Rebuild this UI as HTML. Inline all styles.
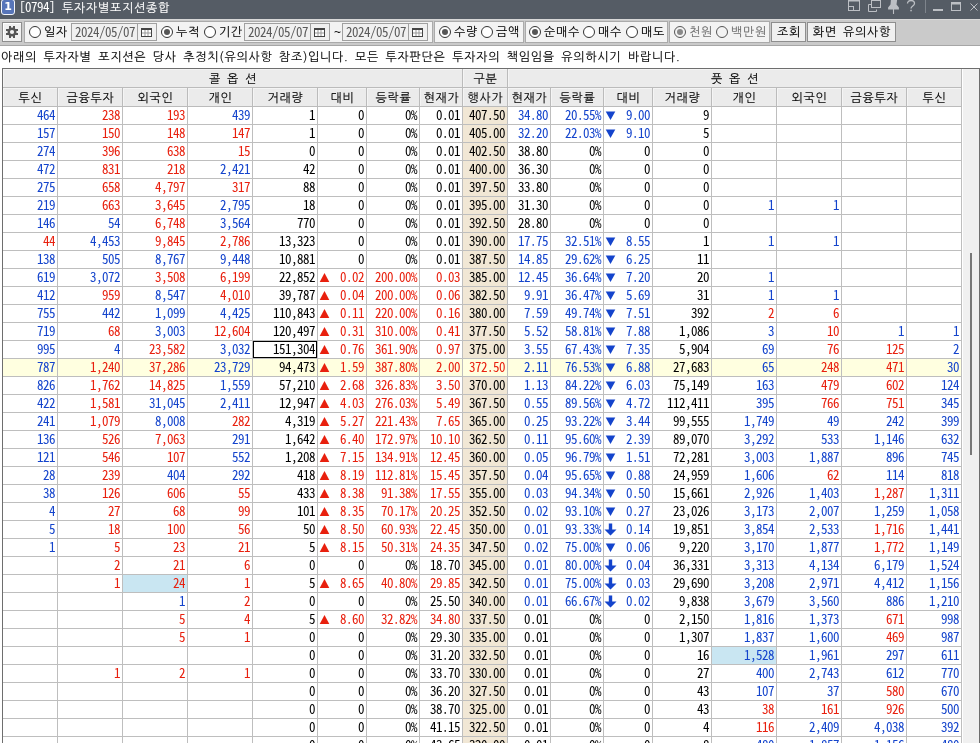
<!DOCTYPE html><html lang="ko"><head><meta charset="utf-8"><title>[0794] 투자자별포지션종합</title><style>
*{box-sizing:border-box}
html,body{margin:0;padding:0}
body{will-change:transform;width:980px;height:743px;overflow:hidden;background:#fff;position:relative;letter-spacing:-0.5px;font:13px "Noto Sans CJK KR","IPAGothic","NanumGothic",sans-serif;font-feature-settings:"hwid";color:#000}
.ko{font-family:"NanumGothic","Noto Sans CJK KR",sans-serif;font-size:12px;letter-spacing:0.72px;-webkit-text-stroke:0.12px}
.abs{position:absolute}
#tb{left:0;top:0;width:980px;height:19px;background:#555c65}
#ico{left:1px;top:-1px;width:14px;height:16px;border:1px solid #f4f6fa;border-radius:3px;background:#5775b9;color:#fff;font:bold 11px/14px "DejaVu Sans","Liberation Sans",sans-serif;text-align:center;letter-spacing:0}
#ttl{left:19px;top:0;height:15px;line-height:13px;color:#fff;white-space:nowrap}
#bar{left:0;top:19px;width:980px;height:27px;background:#cacaca;border-bottom:1px solid #a6a6a6;box-shadow:inset 0 1px 0 #d8d8d8}
.grp{top:2px;height:22px;background:#f3f3f3;border:1px solid #aaa}
.btn{top:3px;height:20px;background:#f0f0f0;border:1px solid #8e8e8e;text-align:center;line-height:18px;white-space:nowrap;padding-left:1px}
.rd{top:7px;width:12px;height:12px;border:1px solid #333;border-radius:50%;background:#fff}
.rd.on::after{content:"";position:absolute;left:2px;top:2px;width:6px;height:6px;border-radius:50%;background:#555}
.rd.dis{border-color:#555;background:#f3f3f3}
.rd.dis.on::after{background:#888}
.lb{top:3px;margin-left:1px;height:20px;line-height:20px;white-space:nowrap}
.lb.dis{color:#707070}
.dt{top:4px;width:86px;height:18px;border:1px solid #a0a0a0;background:#f0f0f0}
.dt span{position:absolute;left:3px;top:0px;line-height:16px;color:#5a5a5a}
.dt i{position:absolute;left:65px;top:-1px;width:20px;height:18px;border:1px solid #a0a0a0;background:#f0f0f0}
.dt svg{position:absolute;left:3px;top:4px}
#note{left:1px;top:48px;height:18px;line-height:19px;white-space:nowrap;word-spacing:2.5px}
#grid{left:2px;top:68px;width:978px;height:675px;border-left:1px solid #6e6e6e;border-top:1px solid #6e6e6e;border-right:1px solid #6e6e6e;background:#fff;overflow:hidden}
.row{position:absolute;left:0;height:18px;display:flex;white-space:nowrap}
.row>div{height:18px;border-right:1px solid #bebebe;border-bottom:1px solid #bebebe;text-align:right;padding-right:2px;line-height:15px;flex:none;position:relative}
.hd>div{background:#ebebeb;text-align:center;padding:1px 0 0 1px;height:19px;line-height:18px;border-color:#bbb;box-shadow:inset 1px 1px 0 #f4f4f4}
.b{color:#1444cc}.r{color:#e8200e}.k{color:#000}
.st{background:#f1e7d5}
.hl>div{background:#ffffe0}
.sel{background:#c9e6f2 !important}
.foc{box-shadow:inset 0 0 0 1px #000}
.ar{position:absolute;left:1px;top:3px}
#sb{left:959px;top:0;width:17px;height:675px;background:#f0f0f0;border-left:1px solid #fff}
#th{left:967px;top:184px;width:2px;height:202px;background:#787878}
</style></head><body>
<div id="tb" class="abs"><div id="ico" class="abs">1</div><div id="ttl" class="abs">[0794] <span class="ko" style="margin-left:1px">투자자별포지션종합</span></div>
<svg class="abs" style="left:840px;top:0" width="140" height="19" viewBox="0 0 140 19" fill="none" stroke="#bcbfc4" stroke-width="1">
<rect x="8.5" y="0.5" width="11" height="10"/><rect x="8" y="-1" width="12" height="2.5" fill="#bcbfc4" stroke="none"/><rect x="8.5" y="6.5" width="5" height="4"/>
<rect x="31.5" y="-0.5" width="9" height="8"/><rect x="31" y="-1" width="10" height="2" fill="#bcbfc4" stroke="none"/><path d="M31.5 4.500h-3v7h8v-2"/>
<path d="M50.900 0H57.100L56.500 4.500L58.900 7.500V9.600H48.100V7.500L50.500 4.500Z" fill="#bcbfc4" stroke="none"/><path d="M53.500 9v5" stroke-width="1.100"/>
<path d="M67.5 3.5c0-4 7-4 7 0c0 2.5-3.500 2.500-3.500 5" stroke-width="1.3"/><rect x="70.300" y="9.800" width="1.500" height="1.500" fill="#bcbfc4" stroke="none"/>
<path d="M85.500 0v13" stroke="#7e848c"/>
<rect x="93" y="9" width="10" height="2" fill="#bcbfc4" stroke="none"/>
<rect x="111.500" y="2.500" width="9" height="8"/><rect x="111" y="2" width="10" height="2.500" fill="#bcbfc4" stroke="none"/>
<path d="M130.500 3.500l7 7m0-7l-7 7" stroke-width="1"/>
</svg>
</div>
<div id="bar" class="abs">
<div class="abs btn" style="left:2px;width:20px;padding:0;box-shadow:inset 1px 1px 0 #fff"><svg width="12" height="12" viewBox="0 0 12 12" style="position:absolute;left:3px;top:3px"><g fill="#555"><rect x="3" y="0" width="2" height="12"/><rect x="7" y="0" width="2" height="12"/><rect x="0" y="3" width="12" height="2"/><rect x="0" y="7" width="12" height="2"/><circle cx="6" cy="6" r="4.500"/></g><circle cx="6" cy="6" r="2.100" fill="#f0f0f0"/></svg></div>
<div class="abs grp" style="left:24px;width:409px"></div>
<div class="abs grp" style="left:434px;width:90px"></div>
<div class="abs grp" style="left:525px;width:143px"></div>
<div class="abs grp" style="left:669px;width:101px"></div>
<div class="abs rd" style="left:29px"></div><div class="abs lb ko" style="left:43px">일자</div><div class="abs dt" style="left:71px"><span>2024/05/07</span><i><svg width="11" height="9" viewBox="0 0 11 9"><rect x="0.5" y="0.5" width="10" height="8" fill="#fff" stroke="#444"/><rect x="0" y="0" width="11" height="2" fill="#444"/><path d="M4 2v6M7 2v6M1 5h9" stroke="#999" stroke-width="1"/></svg></i></div>
<div class="abs rd on" style="left:161px"></div><div class="abs lb ko" style="left:175px">누적</div>
<div class="abs rd" style="left:204px"></div><div class="abs lb ko" style="left:218px">기간</div><div class="abs dt" style="left:244px"><span>2024/05/07</span><i><svg width="11" height="9" viewBox="0 0 11 9"><rect x="0.5" y="0.5" width="10" height="8" fill="#fff" stroke="#444"/><rect x="0" y="0" width="11" height="2" fill="#444"/><path d="M4 2v6M7 2v6M1 5h9" stroke="#999" stroke-width="1"/></svg></i></div>
<div class="abs lb" style="left:333px;font:12px/20px Liberation Sans,sans-serif">~</div>
<div class="abs dt" style="left:342px"><span>2024/05/07</span><i><svg width="11" height="9" viewBox="0 0 11 9"><rect x="0.5" y="0.5" width="10" height="8" fill="#fff" stroke="#444"/><rect x="0" y="0" width="11" height="2" fill="#444"/><path d="M4 2v6M7 2v6M1 5h9" stroke="#999" stroke-width="1"/></svg></i></div>
<div class="abs rd on" style="left:439px"></div><div class="abs lb ko" style="left:453px">수량</div><div class="abs rd" style="left:481px"></div><div class="abs lb ko" style="left:495px">금액</div>
<div class="abs rd on" style="left:529px"></div><div class="abs lb ko" style="left:543px">순매수</div><div class="abs rd" style="left:583px"></div><div class="abs lb ko" style="left:597px">매수</div><div class="abs rd" style="left:626px"></div><div class="abs lb ko" style="left:640px">매도</div>
<div class="abs rd on dis" style="left:674px"></div><div class="abs lb ko dis" style="left:688px">천원</div><div class="abs rd dis" style="left:716px"></div><div class="abs lb ko dis" style="left:730px">백만원</div>
<div class="abs btn ko" style="left:771px;width:35px">조회</div>
<div class="abs btn ko" style="left:807px;width:89px;word-spacing:2px">화면 유의사항</div>
</div>
<div id="note" class="abs ko">아래의 투자자별 포지션은 당사 추정치(유의사항 참조)입니다. 모든 투자판단은 투자자의 책임임을 유의하시기 바랍니다.</div>
<div id="grid" class="abs">
<div class="row hd ko" style="top:0;height:19px"><div style="width:460px;word-spacing:2px">콜 옵 션</div><div style="width:45px">구분</div><div style="width:454px;word-spacing:2px">풋 옵 션</div></div>
<div class="row hd ko" style="top:19px;height:19px"><div style="width:55px">투신</div><div style="width:65px">금융투자</div><div style="width:65px">외국인</div><div style="width:65px">개인</div><div style="width:65px">거래량</div><div style="width:49px">대비</div><div style="width:53px">등락률</div><div style="width:43px">현재가</div><div style="width:45px">행사가</div><div style="width:43px">현재가</div><div style="width:53px">등락률</div><div style="width:49px">대비</div><div style="width:59px">거래량</div><div style="width:65px">개인</div><div style="width:65px">외국인</div><div style="width:65px">금융투자</div><div style="width:55px">투신</div></div>
<div class="row" style="top:38px"><div class="b" style="width:55px">464</div><div class="r" style="width:65px">238</div><div class="r" style="width:65px">193</div><div class="b" style="width:65px">439</div><div class="k" style="width:65px">1</div><div class="k" style="width:49px">0</div><div class="k" style="width:53px">0%</div><div class="k" style="width:43px">0.01</div><div class="k st" style="width:45px">407.50</div><div class="b" style="width:43px">34.80</div><div class="b" style="width:53px">20.55%</div><div class="b" style="width:49px"><svg class="ar" width="11" height="11" viewBox="0 0 11 11"><path d="M5.500 10L10.300 1.500H0.700z" fill="#1444cc"/></svg>9.00</div><div class="k" style="width:59px">9</div><div class="k" style="width:65px"></div><div class="k" style="width:65px"></div><div class="k" style="width:65px"></div><div class="k" style="width:55px"></div></div>
<div class="row" style="top:56px"><div class="b" style="width:55px">157</div><div class="r" style="width:65px">150</div><div class="r" style="width:65px">148</div><div class="r" style="width:65px">147</div><div class="k" style="width:65px">1</div><div class="k" style="width:49px">0</div><div class="k" style="width:53px">0%</div><div class="k" style="width:43px">0.01</div><div class="k st" style="width:45px">405.00</div><div class="b" style="width:43px">32.20</div><div class="b" style="width:53px">22.03%</div><div class="b" style="width:49px"><svg class="ar" width="11" height="11" viewBox="0 0 11 11"><path d="M5.500 10L10.300 1.500H0.700z" fill="#1444cc"/></svg>9.10</div><div class="k" style="width:59px">5</div><div class="k" style="width:65px"></div><div class="k" style="width:65px"></div><div class="k" style="width:65px"></div><div class="k" style="width:55px"></div></div>
<div class="row" style="top:74px"><div class="b" style="width:55px">274</div><div class="r" style="width:65px">396</div><div class="r" style="width:65px">638</div><div class="r" style="width:65px">15</div><div class="k" style="width:65px">0</div><div class="k" style="width:49px">0</div><div class="k" style="width:53px">0%</div><div class="k" style="width:43px">0.01</div><div class="k st" style="width:45px">402.50</div><div class="k" style="width:43px">38.80</div><div class="k" style="width:53px">0%</div><div class="k" style="width:49px">0</div><div class="k" style="width:59px">0</div><div class="k" style="width:65px"></div><div class="k" style="width:65px"></div><div class="k" style="width:65px"></div><div class="k" style="width:55px"></div></div>
<div class="row" style="top:92px"><div class="b" style="width:55px">472</div><div class="r" style="width:65px">831</div><div class="r" style="width:65px">218</div><div class="b" style="width:65px">2,421</div><div class="k" style="width:65px">42</div><div class="k" style="width:49px">0</div><div class="k" style="width:53px">0%</div><div class="k" style="width:43px">0.01</div><div class="k st" style="width:45px">400.00</div><div class="k" style="width:43px">36.30</div><div class="k" style="width:53px">0%</div><div class="k" style="width:49px">0</div><div class="k" style="width:59px">0</div><div class="k" style="width:65px"></div><div class="k" style="width:65px"></div><div class="k" style="width:65px"></div><div class="k" style="width:55px"></div></div>
<div class="row" style="top:110px"><div class="b" style="width:55px">275</div><div class="r" style="width:65px">658</div><div class="r" style="width:65px">4,797</div><div class="r" style="width:65px">317</div><div class="k" style="width:65px">88</div><div class="k" style="width:49px">0</div><div class="k" style="width:53px">0%</div><div class="k" style="width:43px">0.01</div><div class="k st" style="width:45px">397.50</div><div class="k" style="width:43px">33.80</div><div class="k" style="width:53px">0%</div><div class="k" style="width:49px">0</div><div class="k" style="width:59px">0</div><div class="k" style="width:65px"></div><div class="k" style="width:65px"></div><div class="k" style="width:65px"></div><div class="k" style="width:55px"></div></div>
<div class="row" style="top:128px"><div class="b" style="width:55px">219</div><div class="r" style="width:65px">663</div><div class="r" style="width:65px">3,645</div><div class="b" style="width:65px">2,795</div><div class="k" style="width:65px">18</div><div class="k" style="width:49px">0</div><div class="k" style="width:53px">0%</div><div class="k" style="width:43px">0.01</div><div class="k st" style="width:45px">395.00</div><div class="k" style="width:43px">31.30</div><div class="k" style="width:53px">0%</div><div class="k" style="width:49px">0</div><div class="k" style="width:59px">0</div><div class="b" style="width:65px">1</div><div class="b" style="width:65px">1</div><div class="k" style="width:65px"></div><div class="k" style="width:55px"></div></div>
<div class="row" style="top:146px"><div class="b" style="width:55px">146</div><div class="b" style="width:65px">54</div><div class="r" style="width:65px">6,748</div><div class="b" style="width:65px">3,564</div><div class="k" style="width:65px">770</div><div class="k" style="width:49px">0</div><div class="k" style="width:53px">0%</div><div class="k" style="width:43px">0.01</div><div class="k st" style="width:45px">392.50</div><div class="k" style="width:43px">28.80</div><div class="k" style="width:53px">0%</div><div class="k" style="width:49px">0</div><div class="k" style="width:59px">0</div><div class="k" style="width:65px"></div><div class="k" style="width:65px"></div><div class="k" style="width:65px"></div><div class="k" style="width:55px"></div></div>
<div class="row" style="top:164px"><div class="r" style="width:55px">44</div><div class="b" style="width:65px">4,453</div><div class="r" style="width:65px">9,845</div><div class="r" style="width:65px">2,786</div><div class="k" style="width:65px">13,323</div><div class="k" style="width:49px">0</div><div class="k" style="width:53px">0%</div><div class="k" style="width:43px">0.01</div><div class="k st" style="width:45px">390.00</div><div class="b" style="width:43px">17.75</div><div class="b" style="width:53px">32.51%</div><div class="b" style="width:49px"><svg class="ar" width="11" height="11" viewBox="0 0 11 11"><path d="M5.500 10L10.300 1.500H0.700z" fill="#1444cc"/></svg>8.55</div><div class="k" style="width:59px">1</div><div class="b" style="width:65px">1</div><div class="b" style="width:65px">1</div><div class="k" style="width:65px"></div><div class="k" style="width:55px"></div></div>
<div class="row" style="top:182px"><div class="b" style="width:55px">138</div><div class="b" style="width:65px">505</div><div class="b" style="width:65px">8,767</div><div class="b" style="width:65px">9,448</div><div class="k" style="width:65px">10,881</div><div class="k" style="width:49px">0</div><div class="k" style="width:53px">0%</div><div class="k" style="width:43px">0.01</div><div class="k st" style="width:45px">387.50</div><div class="b" style="width:43px">14.85</div><div class="b" style="width:53px">29.62%</div><div class="b" style="width:49px"><svg class="ar" width="11" height="11" viewBox="0 0 11 11"><path d="M5.500 10L10.300 1.500H0.700z" fill="#1444cc"/></svg>6.25</div><div class="k" style="width:59px">11</div><div class="k" style="width:65px"></div><div class="k" style="width:65px"></div><div class="k" style="width:65px"></div><div class="k" style="width:55px"></div></div>
<div class="row" style="top:200px"><div class="b" style="width:55px">619</div><div class="b" style="width:65px">3,072</div><div class="r" style="width:65px">3,508</div><div class="r" style="width:65px">6,199</div><div class="k" style="width:65px">22,852</div><div class="r" style="width:49px"><svg class="ar" width="11" height="11" viewBox="0 0 11 11"><path d="M5.500 1L10.300 10H0.700z" fill="#e8200e"/></svg>0.02</div><div class="r" style="width:53px">200.00%</div><div class="r" style="width:43px">0.03</div><div class="k st" style="width:45px">385.00</div><div class="b" style="width:43px">12.45</div><div class="b" style="width:53px">36.64%</div><div class="b" style="width:49px"><svg class="ar" width="11" height="11" viewBox="0 0 11 11"><path d="M5.500 10L10.300 1.500H0.700z" fill="#1444cc"/></svg>7.20</div><div class="k" style="width:59px">20</div><div class="b" style="width:65px">1</div><div class="k" style="width:65px"></div><div class="k" style="width:65px"></div><div class="k" style="width:55px"></div></div>
<div class="row" style="top:218px"><div class="b" style="width:55px">412</div><div class="r" style="width:65px">959</div><div class="b" style="width:65px">8,547</div><div class="r" style="width:65px">4,010</div><div class="k" style="width:65px">39,787</div><div class="r" style="width:49px"><svg class="ar" width="11" height="11" viewBox="0 0 11 11"><path d="M5.500 1L10.300 10H0.700z" fill="#e8200e"/></svg>0.04</div><div class="r" style="width:53px">200.00%</div><div class="r" style="width:43px">0.06</div><div class="k st" style="width:45px">382.50</div><div class="b" style="width:43px">9.91</div><div class="b" style="width:53px">36.47%</div><div class="b" style="width:49px"><svg class="ar" width="11" height="11" viewBox="0 0 11 11"><path d="M5.500 10L10.300 1.500H0.700z" fill="#1444cc"/></svg>5.69</div><div class="k" style="width:59px">31</div><div class="b" style="width:65px">1</div><div class="b" style="width:65px">1</div><div class="k" style="width:65px"></div><div class="k" style="width:55px"></div></div>
<div class="row" style="top:236px"><div class="b" style="width:55px">755</div><div class="b" style="width:65px">442</div><div class="b" style="width:65px">1,099</div><div class="b" style="width:65px">4,425</div><div class="k" style="width:65px">110,843</div><div class="r" style="width:49px"><svg class="ar" width="11" height="11" viewBox="0 0 11 11"><path d="M5.500 1L10.300 10H0.700z" fill="#e8200e"/></svg>0.11</div><div class="r" style="width:53px">220.00%</div><div class="r" style="width:43px">0.16</div><div class="k st" style="width:45px">380.00</div><div class="b" style="width:43px">7.59</div><div class="b" style="width:53px">49.74%</div><div class="b" style="width:49px"><svg class="ar" width="11" height="11" viewBox="0 0 11 11"><path d="M5.500 10L10.300 1.500H0.700z" fill="#1444cc"/></svg>7.51</div><div class="k" style="width:59px">392</div><div class="r" style="width:65px">2</div><div class="r" style="width:65px">6</div><div class="k" style="width:65px"></div><div class="k" style="width:55px"></div></div>
<div class="row" style="top:254px"><div class="b" style="width:55px">719</div><div class="r" style="width:65px">68</div><div class="b" style="width:65px">3,003</div><div class="r" style="width:65px">12,604</div><div class="k" style="width:65px">120,497</div><div class="r" style="width:49px"><svg class="ar" width="11" height="11" viewBox="0 0 11 11"><path d="M5.500 1L10.300 10H0.700z" fill="#e8200e"/></svg>0.31</div><div class="r" style="width:53px">310.00%</div><div class="r" style="width:43px">0.41</div><div class="k st" style="width:45px">377.50</div><div class="b" style="width:43px">5.52</div><div class="b" style="width:53px">58.81%</div><div class="b" style="width:49px"><svg class="ar" width="11" height="11" viewBox="0 0 11 11"><path d="M5.500 10L10.300 1.500H0.700z" fill="#1444cc"/></svg>7.88</div><div class="k" style="width:59px">1,086</div><div class="b" style="width:65px">3</div><div class="r" style="width:65px">10</div><div class="b" style="width:65px">1</div><div class="b" style="width:55px">1</div></div>
<div class="row" style="top:272px"><div class="b" style="width:55px">995</div><div class="b" style="width:65px">4</div><div class="r" style="width:65px">23,582</div><div class="b" style="width:65px">3,032</div><div class="k foc" style="width:65px">151,304</div><div class="r" style="width:49px"><svg class="ar" width="11" height="11" viewBox="0 0 11 11"><path d="M5.500 1L10.300 10H0.700z" fill="#e8200e"/></svg>0.76</div><div class="r" style="width:53px">361.90%</div><div class="r" style="width:43px">0.97</div><div class="k st" style="width:45px">375.00</div><div class="b" style="width:43px">3.55</div><div class="b" style="width:53px">67.43%</div><div class="b" style="width:49px"><svg class="ar" width="11" height="11" viewBox="0 0 11 11"><path d="M5.500 10L10.300 1.500H0.700z" fill="#1444cc"/></svg>7.35</div><div class="k" style="width:59px">5,904</div><div class="b" style="width:65px">69</div><div class="r" style="width:65px">76</div><div class="r" style="width:65px">125</div><div class="b" style="width:55px">2</div></div>
<div class="row hl" style="top:290px"><div class="b" style="width:55px">787</div><div class="r" style="width:65px">1,240</div><div class="r" style="width:65px">37,286</div><div class="b" style="width:65px">23,729</div><div class="k" style="width:65px">94,473</div><div class="r" style="width:49px"><svg class="ar" width="11" height="11" viewBox="0 0 11 11"><path d="M5.500 1L10.300 10H0.700z" fill="#e8200e"/></svg>1.59</div><div class="r" style="width:53px">387.80%</div><div class="r" style="width:43px">2.00</div><div class="r st" style="width:45px">372.50</div><div class="b" style="width:43px">2.11</div><div class="b" style="width:53px">76.53%</div><div class="b" style="width:49px"><svg class="ar" width="11" height="11" viewBox="0 0 11 11"><path d="M5.500 10L10.300 1.500H0.700z" fill="#1444cc"/></svg>6.88</div><div class="k" style="width:59px">27,683</div><div class="b" style="width:65px">65</div><div class="r" style="width:65px">248</div><div class="r" style="width:65px">471</div><div class="b" style="width:55px">30</div></div>
<div class="row" style="top:308px"><div class="b" style="width:55px">826</div><div class="r" style="width:65px">1,762</div><div class="r" style="width:65px">14,825</div><div class="b" style="width:65px">1,559</div><div class="k" style="width:65px">57,210</div><div class="r" style="width:49px"><svg class="ar" width="11" height="11" viewBox="0 0 11 11"><path d="M5.500 1L10.300 10H0.700z" fill="#e8200e"/></svg>2.68</div><div class="r" style="width:53px">326.83%</div><div class="r" style="width:43px">3.50</div><div class="k st" style="width:45px">370.00</div><div class="b" style="width:43px">1.13</div><div class="b" style="width:53px">84.22%</div><div class="b" style="width:49px"><svg class="ar" width="11" height="11" viewBox="0 0 11 11"><path d="M5.500 10L10.300 1.500H0.700z" fill="#1444cc"/></svg>6.03</div><div class="k" style="width:59px">75,149</div><div class="b" style="width:65px">163</div><div class="r" style="width:65px">479</div><div class="r" style="width:65px">602</div><div class="b" style="width:55px">124</div></div>
<div class="row" style="top:326px"><div class="b" style="width:55px">422</div><div class="r" style="width:65px">1,581</div><div class="b" style="width:65px">31,045</div><div class="b" style="width:65px">2,411</div><div class="k" style="width:65px">12,947</div><div class="r" style="width:49px"><svg class="ar" width="11" height="11" viewBox="0 0 11 11"><path d="M5.500 1L10.300 10H0.700z" fill="#e8200e"/></svg>4.03</div><div class="r" style="width:53px">276.03%</div><div class="r" style="width:43px">5.49</div><div class="k st" style="width:45px">367.50</div><div class="b" style="width:43px">0.55</div><div class="b" style="width:53px">89.56%</div><div class="b" style="width:49px"><svg class="ar" width="11" height="11" viewBox="0 0 11 11"><path d="M5.500 10L10.300 1.500H0.700z" fill="#1444cc"/></svg>4.72</div><div class="k" style="width:59px">112,411</div><div class="b" style="width:65px">395</div><div class="r" style="width:65px">766</div><div class="r" style="width:65px">751</div><div class="b" style="width:55px">345</div></div>
<div class="row" style="top:344px"><div class="b" style="width:55px">241</div><div class="r" style="width:65px">1,079</div><div class="b" style="width:65px">8,008</div><div class="r" style="width:65px">282</div><div class="k" style="width:65px">4,319</div><div class="r" style="width:49px"><svg class="ar" width="11" height="11" viewBox="0 0 11 11"><path d="M5.500 1L10.300 10H0.700z" fill="#e8200e"/></svg>5.27</div><div class="r" style="width:53px">221.43%</div><div class="r" style="width:43px">7.65</div><div class="k st" style="width:45px">365.00</div><div class="b" style="width:43px">0.25</div><div class="b" style="width:53px">93.22%</div><div class="b" style="width:49px"><svg class="ar" width="11" height="11" viewBox="0 0 11 11"><path d="M5.500 10L10.300 1.500H0.700z" fill="#1444cc"/></svg>3.44</div><div class="k" style="width:59px">99,555</div><div class="b" style="width:65px">1,749</div><div class="b" style="width:65px">49</div><div class="b" style="width:65px">242</div><div class="b" style="width:55px">399</div></div>
<div class="row" style="top:362px"><div class="b" style="width:55px">136</div><div class="r" style="width:65px">526</div><div class="r" style="width:65px">7,063</div><div class="b" style="width:65px">291</div><div class="k" style="width:65px">1,642</div><div class="r" style="width:49px"><svg class="ar" width="11" height="11" viewBox="0 0 11 11"><path d="M5.500 1L10.300 10H0.700z" fill="#e8200e"/></svg>6.40</div><div class="r" style="width:53px">172.97%</div><div class="r" style="width:43px">10.10</div><div class="k st" style="width:45px">362.50</div><div class="b" style="width:43px">0.11</div><div class="b" style="width:53px">95.60%</div><div class="b" style="width:49px"><svg class="ar" width="11" height="11" viewBox="0 0 11 11"><path d="M5.500 10L10.300 1.500H0.700z" fill="#1444cc"/></svg>2.39</div><div class="k" style="width:59px">89,070</div><div class="b" style="width:65px">3,292</div><div class="b" style="width:65px">533</div><div class="b" style="width:65px">1,146</div><div class="b" style="width:55px">632</div></div>
<div class="row" style="top:380px"><div class="b" style="width:55px">121</div><div class="r" style="width:65px">546</div><div class="r" style="width:65px">107</div><div class="b" style="width:65px">552</div><div class="k" style="width:65px">1,208</div><div class="r" style="width:49px"><svg class="ar" width="11" height="11" viewBox="0 0 11 11"><path d="M5.500 1L10.300 10H0.700z" fill="#e8200e"/></svg>7.15</div><div class="r" style="width:53px">134.91%</div><div class="r" style="width:43px">12.45</div><div class="k st" style="width:45px">360.00</div><div class="b" style="width:43px">0.05</div><div class="b" style="width:53px">96.79%</div><div class="b" style="width:49px"><svg class="ar" width="11" height="11" viewBox="0 0 11 11"><path d="M5.500 10L10.300 1.500H0.700z" fill="#1444cc"/></svg>1.51</div><div class="k" style="width:59px">72,281</div><div class="b" style="width:65px">3,003</div><div class="b" style="width:65px">1,887</div><div class="b" style="width:65px">896</div><div class="b" style="width:55px">745</div></div>
<div class="row" style="top:398px"><div class="b" style="width:55px">28</div><div class="r" style="width:65px">239</div><div class="b" style="width:65px">404</div><div class="b" style="width:65px">292</div><div class="k" style="width:65px">418</div><div class="r" style="width:49px"><svg class="ar" width="11" height="11" viewBox="0 0 11 11"><path d="M5.500 1L10.300 10H0.700z" fill="#e8200e"/></svg>8.19</div><div class="r" style="width:53px">112.81%</div><div class="r" style="width:43px">15.45</div><div class="k st" style="width:45px">357.50</div><div class="b" style="width:43px">0.04</div><div class="b" style="width:53px">95.65%</div><div class="b" style="width:49px"><svg class="ar" width="11" height="11" viewBox="0 0 11 11"><path d="M5.500 10L10.300 1.500H0.700z" fill="#1444cc"/></svg>0.88</div><div class="k" style="width:59px">24,959</div><div class="b" style="width:65px">1,606</div><div class="r" style="width:65px">62</div><div class="b" style="width:65px">114</div><div class="b" style="width:55px">818</div></div>
<div class="row" style="top:416px"><div class="b" style="width:55px">38</div><div class="r" style="width:65px">126</div><div class="r" style="width:65px">606</div><div class="r" style="width:65px">55</div><div class="k" style="width:65px">433</div><div class="r" style="width:49px"><svg class="ar" width="11" height="11" viewBox="0 0 11 11"><path d="M5.500 1L10.300 10H0.700z" fill="#e8200e"/></svg>8.38</div><div class="r" style="width:53px">91.38%</div><div class="r" style="width:43px">17.55</div><div class="k st" style="width:45px">355.00</div><div class="b" style="width:43px">0.03</div><div class="b" style="width:53px">94.34%</div><div class="b" style="width:49px"><svg class="ar" width="11" height="11" viewBox="0 0 11 11"><path d="M5.500 10L10.300 1.500H0.700z" fill="#1444cc"/></svg>0.50</div><div class="k" style="width:59px">15,661</div><div class="b" style="width:65px">2,926</div><div class="b" style="width:65px">1,403</div><div class="r" style="width:65px">1,287</div><div class="b" style="width:55px">1,311</div></div>
<div class="row" style="top:434px"><div class="b" style="width:55px">4</div><div class="r" style="width:65px">27</div><div class="r" style="width:65px">68</div><div class="r" style="width:65px">99</div><div class="k" style="width:65px">101</div><div class="r" style="width:49px"><svg class="ar" width="11" height="11" viewBox="0 0 11 11"><path d="M5.500 1L10.300 10H0.700z" fill="#e8200e"/></svg>8.35</div><div class="r" style="width:53px">70.17%</div><div class="r" style="width:43px">20.25</div><div class="k st" style="width:45px">352.50</div><div class="b" style="width:43px">0.02</div><div class="b" style="width:53px">93.10%</div><div class="b" style="width:49px"><svg class="ar" width="11" height="11" viewBox="0 0 11 11"><path d="M5.500 10L10.300 1.500H0.700z" fill="#1444cc"/></svg>0.27</div><div class="k" style="width:59px">23,026</div><div class="b" style="width:65px">3,173</div><div class="b" style="width:65px">2,007</div><div class="b" style="width:65px">1,259</div><div class="b" style="width:55px">1,058</div></div>
<div class="row" style="top:452px"><div class="b" style="width:55px">5</div><div class="r" style="width:65px">18</div><div class="r" style="width:65px">100</div><div class="r" style="width:65px">56</div><div class="k" style="width:65px">50</div><div class="r" style="width:49px"><svg class="ar" width="11" height="11" viewBox="0 0 11 11"><path d="M5.500 1L10.300 10H0.700z" fill="#e8200e"/></svg>8.50</div><div class="r" style="width:53px">60.93%</div><div class="r" style="width:43px">22.45</div><div class="k st" style="width:45px">350.00</div><div class="b" style="width:43px">0.01</div><div class="b" style="width:53px">93.33%</div><div class="b" style="width:49px"><svg class="ar" width="13" height="13" viewBox="0 0 13 13" style="top:2px;left:0"><path d="M4.800 0.500h3.400v6h4.300L6.500 12.500L0.500 6.500h4.300z" fill="#1444cc"/></svg>0.14</div><div class="k" style="width:59px">19,851</div><div class="b" style="width:65px">3,854</div><div class="b" style="width:65px">2,533</div><div class="r" style="width:65px">1,716</div><div class="b" style="width:55px">1,441</div></div>
<div class="row" style="top:470px"><div class="b" style="width:55px">1</div><div class="r" style="width:65px">5</div><div class="r" style="width:65px">23</div><div class="r" style="width:65px">21</div><div class="k" style="width:65px">5</div><div class="r" style="width:49px"><svg class="ar" width="11" height="11" viewBox="0 0 11 11"><path d="M5.500 1L10.300 10H0.700z" fill="#e8200e"/></svg>8.15</div><div class="r" style="width:53px">50.31%</div><div class="r" style="width:43px">24.35</div><div class="k st" style="width:45px">347.50</div><div class="b" style="width:43px">0.02</div><div class="b" style="width:53px">75.00%</div><div class="b" style="width:49px"><svg class="ar" width="11" height="11" viewBox="0 0 11 11"><path d="M5.500 10L10.300 1.500H0.700z" fill="#1444cc"/></svg>0.06</div><div class="k" style="width:59px">9,220</div><div class="b" style="width:65px">3,170</div><div class="b" style="width:65px">1,877</div><div class="r" style="width:65px">1,772</div><div class="b" style="width:55px">1,149</div></div>
<div class="row" style="top:488px"><div class="k" style="width:55px"></div><div class="r" style="width:65px">2</div><div class="r" style="width:65px">21</div><div class="r" style="width:65px">6</div><div class="k" style="width:65px">0</div><div class="k" style="width:49px">0</div><div class="k" style="width:53px">0%</div><div class="k" style="width:43px">18.70</div><div class="k st" style="width:45px">345.00</div><div class="b" style="width:43px">0.01</div><div class="b" style="width:53px">80.00%</div><div class="b" style="width:49px"><svg class="ar" width="13" height="13" viewBox="0 0 13 13" style="top:2px;left:0"><path d="M4.800 0.500h3.400v6h4.300L6.500 12.500L0.500 6.500h4.300z" fill="#1444cc"/></svg>0.04</div><div class="k" style="width:59px">36,331</div><div class="b" style="width:65px">3,313</div><div class="b" style="width:65px">4,134</div><div class="b" style="width:65px">6,179</div><div class="b" style="width:55px">1,524</div></div>
<div class="row" style="top:506px"><div class="k" style="width:55px"></div><div class="r" style="width:65px">1</div><div class="r sel" style="width:65px">24</div><div class="r" style="width:65px">1</div><div class="k" style="width:65px">5</div><div class="r" style="width:49px"><svg class="ar" width="11" height="11" viewBox="0 0 11 11"><path d="M5.500 1L10.300 10H0.700z" fill="#e8200e"/></svg>8.65</div><div class="r" style="width:53px">40.80%</div><div class="r" style="width:43px">29.85</div><div class="k st" style="width:45px">342.50</div><div class="b" style="width:43px">0.01</div><div class="b" style="width:53px">75.00%</div><div class="b" style="width:49px"><svg class="ar" width="13" height="13" viewBox="0 0 13 13" style="top:2px;left:0"><path d="M4.800 0.500h3.400v6h4.300L6.500 12.500L0.500 6.500h4.300z" fill="#1444cc"/></svg>0.03</div><div class="k" style="width:59px">29,690</div><div class="b" style="width:65px">3,208</div><div class="b" style="width:65px">2,971</div><div class="b" style="width:65px">4,412</div><div class="b" style="width:55px">1,156</div></div>
<div class="row" style="top:524px"><div class="k" style="width:55px"></div><div class="k" style="width:65px"></div><div class="b" style="width:65px">1</div><div class="r" style="width:65px">2</div><div class="k" style="width:65px">0</div><div class="k" style="width:49px">0</div><div class="k" style="width:53px">0%</div><div class="k" style="width:43px">25.50</div><div class="k st" style="width:45px">340.00</div><div class="b" style="width:43px">0.01</div><div class="b" style="width:53px">66.67%</div><div class="b" style="width:49px"><svg class="ar" width="13" height="13" viewBox="0 0 13 13" style="top:2px;left:0"><path d="M4.800 0.500h3.400v6h4.300L6.500 12.500L0.500 6.500h4.300z" fill="#1444cc"/></svg>0.02</div><div class="k" style="width:59px">9,838</div><div class="b" style="width:65px">3,679</div><div class="b" style="width:65px">3,560</div><div class="b" style="width:65px">886</div><div class="b" style="width:55px">1,210</div></div>
<div class="row" style="top:542px"><div class="k" style="width:55px"></div><div class="k" style="width:65px"></div><div class="r" style="width:65px">5</div><div class="r" style="width:65px">4</div><div class="k" style="width:65px">5</div><div class="r" style="width:49px"><svg class="ar" width="11" height="11" viewBox="0 0 11 11"><path d="M5.500 1L10.300 10H0.700z" fill="#e8200e"/></svg>8.60</div><div class="r" style="width:53px">32.82%</div><div class="r" style="width:43px">34.80</div><div class="k st" style="width:45px">337.50</div><div class="k" style="width:43px">0.01</div><div class="k" style="width:53px">0%</div><div class="k" style="width:49px">0</div><div class="k" style="width:59px">2,150</div><div class="b" style="width:65px">1,816</div><div class="b" style="width:65px">1,373</div><div class="r" style="width:65px">671</div><div class="b" style="width:55px">998</div></div>
<div class="row" style="top:560px"><div class="k" style="width:55px"></div><div class="k" style="width:65px"></div><div class="r" style="width:65px">5</div><div class="r" style="width:65px">1</div><div class="k" style="width:65px">0</div><div class="k" style="width:49px">0</div><div class="k" style="width:53px">0%</div><div class="k" style="width:43px">29.30</div><div class="k st" style="width:45px">335.00</div><div class="k" style="width:43px">0.01</div><div class="k" style="width:53px">0%</div><div class="k" style="width:49px">0</div><div class="k" style="width:59px">1,307</div><div class="b" style="width:65px">1,837</div><div class="b" style="width:65px">1,600</div><div class="r" style="width:65px">469</div><div class="b" style="width:55px">987</div></div>
<div class="row" style="top:578px"><div class="k" style="width:55px"></div><div class="k" style="width:65px"></div><div class="k" style="width:65px"></div><div class="k" style="width:65px"></div><div class="k" style="width:65px">0</div><div class="k" style="width:49px">0</div><div class="k" style="width:53px">0%</div><div class="k" style="width:43px">31.20</div><div class="k st" style="width:45px">332.50</div><div class="k" style="width:43px">0.01</div><div class="k" style="width:53px">0%</div><div class="k" style="width:49px">0</div><div class="k" style="width:59px">16</div><div class="b sel" style="width:65px">1,528</div><div class="b" style="width:65px">1,961</div><div class="b" style="width:65px">297</div><div class="b" style="width:55px">611</div></div>
<div class="row" style="top:596px"><div class="k" style="width:55px"></div><div class="r" style="width:65px">1</div><div class="r" style="width:65px">2</div><div class="r" style="width:65px">1</div><div class="k" style="width:65px">0</div><div class="k" style="width:49px">0</div><div class="k" style="width:53px">0%</div><div class="k" style="width:43px">33.70</div><div class="k st" style="width:45px">330.00</div><div class="k" style="width:43px">0.01</div><div class="k" style="width:53px">0%</div><div class="k" style="width:49px">0</div><div class="k" style="width:59px">27</div><div class="b" style="width:65px">400</div><div class="b" style="width:65px">2,743</div><div class="b" style="width:65px">612</div><div class="b" style="width:55px">770</div></div>
<div class="row" style="top:614px"><div class="k" style="width:55px"></div><div class="k" style="width:65px"></div><div class="k" style="width:65px"></div><div class="k" style="width:65px"></div><div class="k" style="width:65px">0</div><div class="k" style="width:49px">0</div><div class="k" style="width:53px">0%</div><div class="k" style="width:43px">36.20</div><div class="k st" style="width:45px">327.50</div><div class="k" style="width:43px">0.01</div><div class="k" style="width:53px">0%</div><div class="k" style="width:49px">0</div><div class="k" style="width:59px">43</div><div class="b" style="width:65px">107</div><div class="b" style="width:65px">37</div><div class="r" style="width:65px">580</div><div class="b" style="width:55px">670</div></div>
<div class="row" style="top:632px"><div class="k" style="width:55px"></div><div class="k" style="width:65px"></div><div class="k" style="width:65px"></div><div class="k" style="width:65px"></div><div class="k" style="width:65px">0</div><div class="k" style="width:49px">0</div><div class="k" style="width:53px">0%</div><div class="k" style="width:43px">38.70</div><div class="k st" style="width:45px">325.00</div><div class="k" style="width:43px">0.01</div><div class="k" style="width:53px">0%</div><div class="k" style="width:49px">0</div><div class="k" style="width:59px">43</div><div class="r" style="width:65px">38</div><div class="r" style="width:65px">161</div><div class="r" style="width:65px">926</div><div class="b" style="width:55px">500</div></div>
<div class="row" style="top:650px"><div class="k" style="width:55px"></div><div class="k" style="width:65px"></div><div class="k" style="width:65px"></div><div class="k" style="width:65px"></div><div class="k" style="width:65px">0</div><div class="k" style="width:49px">0</div><div class="k" style="width:53px">0%</div><div class="k" style="width:43px">41.15</div><div class="k st" style="width:45px">322.50</div><div class="k" style="width:43px">0.01</div><div class="k" style="width:53px">0%</div><div class="k" style="width:49px">0</div><div class="k" style="width:59px">4</div><div class="r" style="width:65px">116</div><div class="b" style="width:65px">2,409</div><div class="b" style="width:65px">4,038</div><div class="b" style="width:55px">392</div></div>
<div class="row" style="top:668px"><div class="k" style="width:55px"></div><div class="k" style="width:65px"></div><div class="k" style="width:65px"></div><div class="k" style="width:65px"></div><div class="k" style="width:65px">0</div><div class="k" style="width:49px">0</div><div class="k" style="width:53px">0%</div><div class="k" style="width:43px">43.65</div><div class="k st" style="width:45px">320.00</div><div class="k" style="width:43px">0.01</div><div class="k" style="width:53px">0%</div><div class="k" style="width:49px">0</div><div class="k" style="width:59px">8</div><div class="b" style="width:65px">480</div><div class="b" style="width:65px">1,857</div><div class="b" style="width:65px">1,156</div><div class="b" style="width:55px">480</div></div>
<div id="sb" class="abs"></div><div id="th" class="abs"></div>
</div>
</body></html>
